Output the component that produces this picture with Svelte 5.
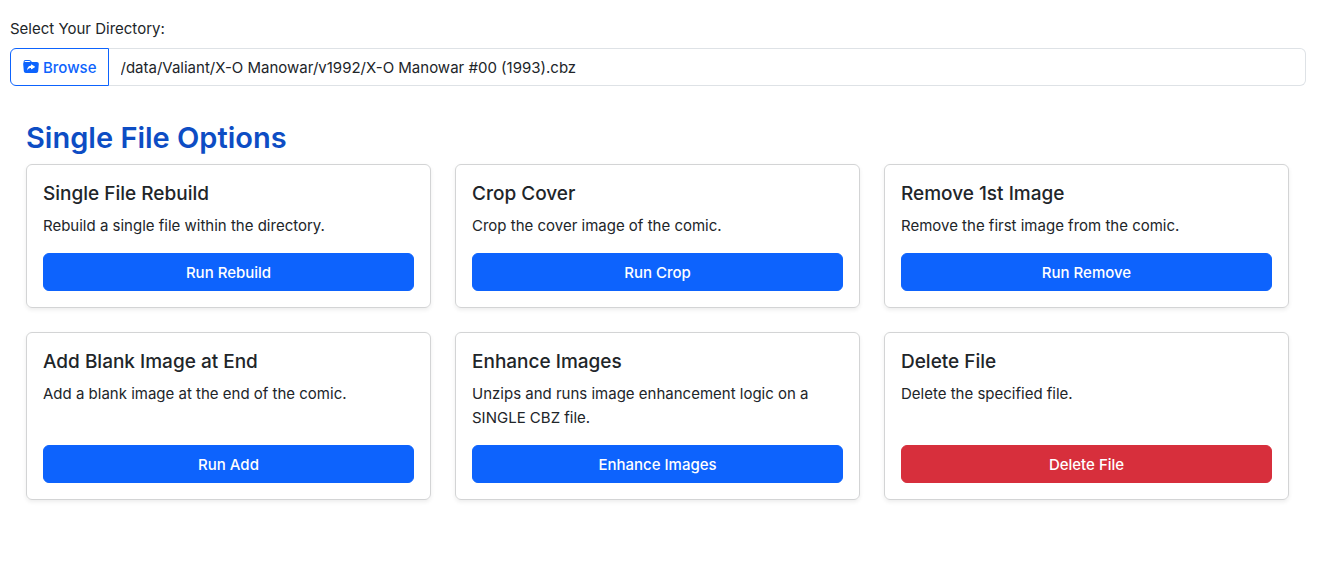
<script>
  let path = $state('/data/Valiant/X-O Manowar/v1992/X-O Manowar #00 (1993).cbz');

  const options = [
    { title: 'Single File Rebuild', text: 'Rebuild a single file within the directory.', action: 'Run Rebuild' },
    { title: 'Crop Cover', text: 'Crop the cover image of the comic.', action: 'Run Crop' },
    { title: 'Remove 1st Image', text: 'Remove the first image from the comic.', action: 'Run Remove' },
    { title: 'Add Blank Image at End', text: 'Add a blank image at the end of the comic.', action: 'Run Add' },
    { title: 'Enhance Images', text: 'Unzips and runs image enhancement logic on a SINGLE CBZ file.', action: 'Enhance Images' },
    { title: 'Delete File', text: 'Delete the specified file.', action: 'Delete File', danger: true }
  ];
</script>

<main>
  <label for="directory">Select Your Directory:</label>
  <div class="input-group">
    <button type="button" class="browse">
      <svg viewBox="0 0 16 16" width="16" height="16" fill="currentColor" aria-hidden="true">
        <path d="M13.81 3H9.828a2 2 0 0 1-1.414-.586l-.828-.828A2 2 0 0 0 6.172 1H2.5a2 2 0 0 0-2 2l.04.87a2 2 0 0 0-.342 1.311l.637 7A2 2 0 0 0 2.826 14h10.348a2 2 0 0 0 1.991-1.819l.637-7A2 2 0 0 0 13.81 3M2.19 3q-.362.002-.683.12L1.5 2.98a1 1 0 0 1 1-.98h3.672a1 1 0 0 1 .707.293L7.586 3zm9.608 5.271-3.182 1.97c-.27.166-.616-.036-.616-.372V9.1s-2.571-.3-4 2.4c.571-4.8 3.143-4.8 4-4.8v-.769c0-.336.346-.538.616-.371l3.182 1.969c.27.166.27.576 0 .742" />
      </svg>
      <span>Browse</span>
    </button>
    <input id="directory" type="text" bind:value={path} />
  </div>

  <section>
    <h2>Single File Options</h2>
    <div class="cards">
      {#each options as option}
        <article>
          <h5>{option.title}</h5>
          <p>{option.text}</p>
          <button type="button" class="run" class:danger={option.danger}>{option.action}</button>
        </article>
      {/each}
    </div>
  </section>
</main>

<style>
  :global(body) {
    margin: 0;
    background: #fff;
  }
  main, button, input {
    font-family: Inter, "Liberation Sans", sans-serif;
    font-size: 15px;
    line-height: 24px;
    color: #212529;
  }
  main, main :global(*) {
    box-sizing: border-box;
  }
  main {
    padding: 17px 17px 24px 10px;
  }
  label {
    display: block;
    margin-bottom: 7px;
  }
  .input-group {
    display: flex;
  }
  .browse {
    display: flex;
    align-items: center;
    gap: 4px;
    height: 38px;
    padding: 0 11px 0 12px;
    border: 1px solid #0d63fd;
    border-radius: 6px 0 0 6px;
    background: #fff;
    color: #0d63fd;
    font-weight: 500;
  }
  .browse span {
    padding-top: 2px;
  }
  input {
    flex: 1;
    min-width: 0;
    height: 38px;
    padding: 6px 12px;
    border: 1px solid #dee2e6;
    border-left: 0;
    border-radius: 0 6px 6px 0;
    background: #fff;
  }
  section {
    padding: 33px 17px 0 16px;
  }
  h2 {
    margin: 0 0 7px;
    font-size: 29px;
    line-height: 38px;
    font-weight: 600;
    color: #0d4dc4;
  }
  .cards {
    display: grid;
    grid-template-columns: repeat(auto-fit, minmax(300px, 1fr));
    gap: 24px;
  }
  article {
    display: flex;
    flex-direction: column;
    padding: 17px 16px 16px;
    border: 1px solid #d3d4d5;
    border-radius: 6px;
    box-shadow: 0 2px 4px rgba(0, 0, 0, 0.075);
  }
  h5 {
    margin: 0 0 8px;
    font-size: 19px;
    line-height: 24px;
    font-weight: 500;
  }
  p {
    margin: 0 0 15px;
  }
  .run {
    margin-top: auto;
    padding: 7px 12px 5px;
    border: 1px solid #0d63fd;
    border-radius: 6px;
    background: #0d63fd;
    color: #fff;
    font-weight: 500;
  }
  .run.danger {
    border-color: #d72f3c;
    background: #d72f3c;
  }
</style>
